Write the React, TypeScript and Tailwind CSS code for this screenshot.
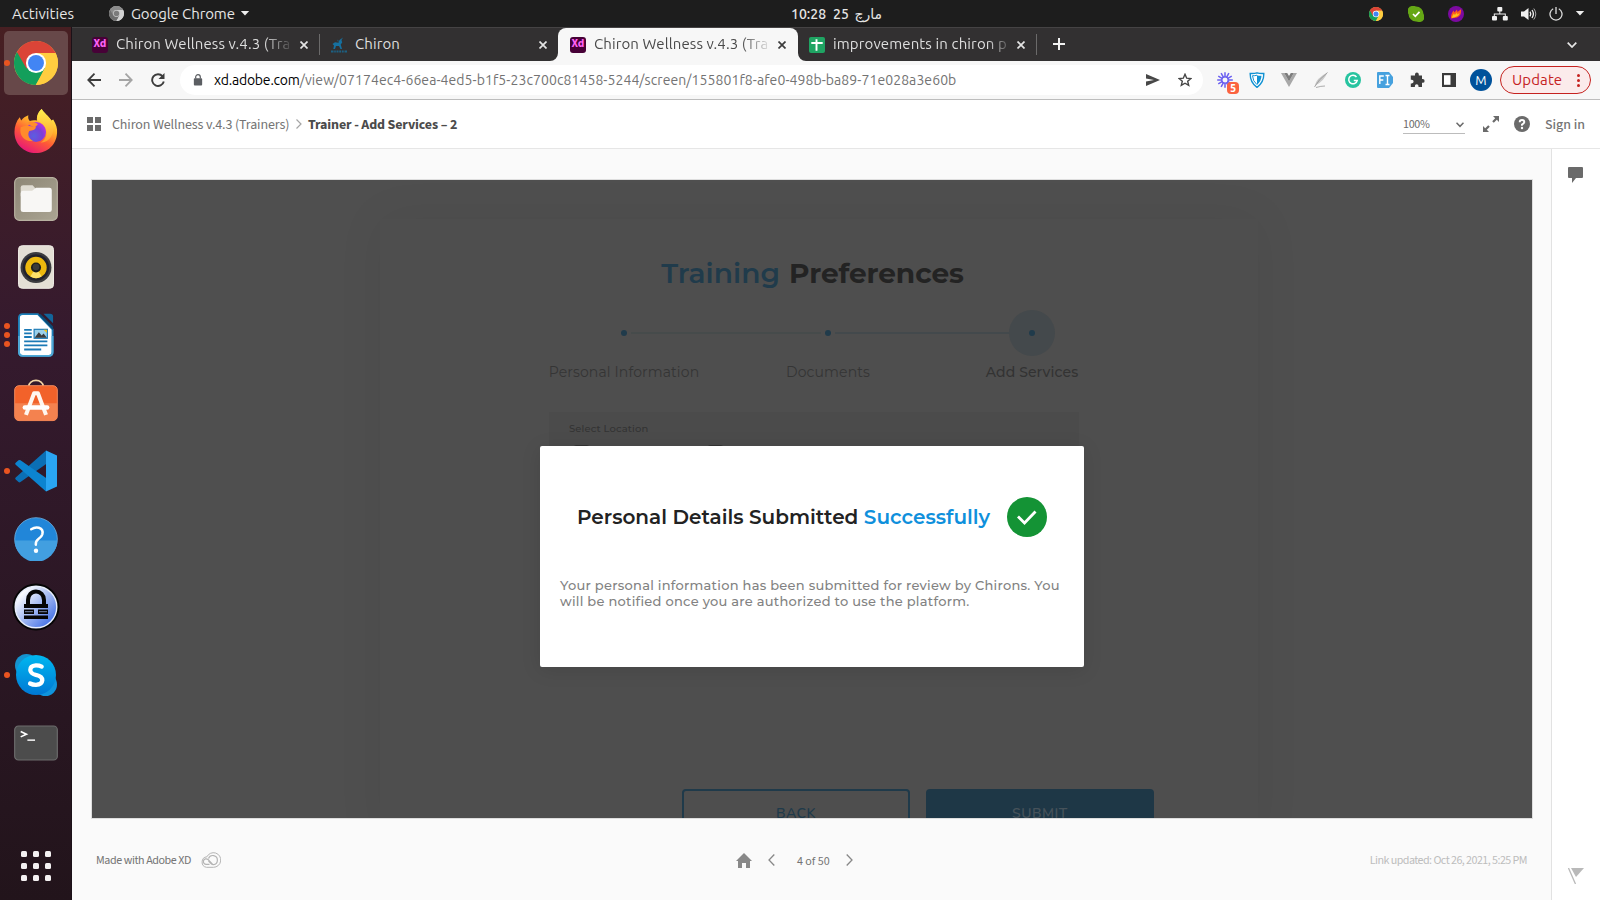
import React from "react";
import type { ReactNode } from "react";

type IconProps = { className?: string };

const UBUNTU = "font-[Ubuntu,'Noto_Sans','DejaVu_Sans',sans-serif]";
const SOURCE = "font-['Source_Sans_3','Noto_Sans_CJK_SC',sans-serif]";
const MONT = "font-[Montserrat,Inter,sans-serif]";
const NUNITO = "font-[Nunito,'Open_Sans',sans-serif]";

/* ---------- Dock icons ---------- */

function ChromeLogo({ className, mono = false }: IconProps & { mono?: boolean }) {
  const red = mono ? "#8c8c8c" : "#db4437";
  const green = mono ? "#6e6e6e" : "#139f5b";
  const yellow = mono ? "#d2d2d2" : "#ffcd40";
  return (
    <svg viewBox="0 0 48 48" className={className}>
      <circle cx="24" cy="24" r="24" fill={yellow} />
      <path d="M24 24 L3.2 12 A24 24 0 0 0 23.6 48 L34.4 30 Z" fill={green} />
      <path d="M24 24 L13.6 30 L3.2 12 A24 24 0 0 1 44.8 12 L46 13 L24 13 Z" fill={red} />
      <path d="M24 13 H45.3 A24 24 0 0 1 24 48 L33.5 29.5 Z" fill={yellow} />
      <circle cx="24" cy="24" r="11" fill={mono ? "#c8c8c8" : "#fff"} />
      <circle cx="24" cy="24" r="8.7" fill={mono ? "#7b7b7b" : "#4285f4"} />
    </svg>
  );
}

function FirefoxLogo({ className }: IconProps) {
  return (
    <svg viewBox="0 0 46 48" className={className}>
      <defs>
        <linearGradient id="ffBody" x1="0.8" y1="0.05" x2="0.3" y2="1">
          <stop offset="0" stopColor="#fff44f" />
          <stop offset="0.35" stopColor="#ffb02a" />
          <stop offset="0.62" stopColor="#ff5a36" />
          <stop offset="1" stopColor="#e5157a" />
        </linearGradient>
        <radialGradient id="ffGlobe" cx="0.4" cy="0.7" r="0.7">
          <stop offset="0" stopColor="#5b5fe0" />
          <stop offset="0.6" stopColor="#7a3fd6" />
          <stop offset="1" stopColor="#b833e1" />
        </radialGradient>
        <linearGradient id="ffTail" x1="0.5" y1="0" x2="0.5" y2="1">
          <stop offset="0" stopColor="#fff14d" />
          <stop offset="1" stopColor="#ff9a2e" />
        </linearGradient>
      </defs>
      <path
        d="M29 1 C31 5 36 8 39 13 L41 12 C44 17 45.5 21 45 26 C44.5 38 35 47 23 47 C10 47 0.500 37.500 0.500 25 C0.500 19 2.500 13.500 6 9.500 L7.500 13 C9.500 10.500 12 8.500 15 7.500 C14.500 10 15 12 16.500 13.500 C19 12.500 22 12.500 24 13 C23.500 8 26 3.500 29 1 Z"
        fill="url(#ffBody)"
      />
      <circle cx="23" cy="25" r="10.500" fill="url(#ffGlobe)" />
      <path d="M29 1 C31 5 36 8 39 13 C42 18 42 26 38 31 C35 35 31 36 28 36 C34 33 35 26 33 21 C31 16 26 15 24.500 12 C23.500 8 26 3.500 29 1 Z" fill="url(#ffTail)" />
      <path d="M7 20 C11 18 17 18.500 23 20 C22.500 22.500 19 23.500 16 24 C14 27 15 32 20 34.500 C11 35 5 29 7 20 Z" fill="#ff8b2c" />
      <path d="M14 15 C18 13.500 23 15 25 17 L22 20 C19 19.500 16 18 14 15 Z" fill="#ff8e2b" />
    </svg>
  );
}

function FilesLogo({ className }: IconProps) {
  return (
    <svg viewBox="0 0 46 46" className={className}>
      <defs>
        <linearGradient id="filesBg" x1="0" y1="0" x2="1" y2="1">
          <stop offset="0" stopColor="#8d8675" />
          <stop offset="1" stopColor="#aaa492" />
        </linearGradient>
      </defs>
      <rect x="0.700" y="0.700" width="44.600" height="44.600" rx="5" fill="url(#filesBg)" stroke="#b8b2a1" strokeWidth="1.200" />
      <path d="M7 11 q0 -2.500 2.500 -2.500 h10 l3 3.500 v8 h-15.500z" fill="#dfdbd1" />
      <path d="M7 17 q0 -2.500 2.500 -2.500 h9.500 l4 -3.300 h14 q2.500 0 2.500 2.500 v20.500 q0 2.500 -2.500 2.500 h-27.500 q-2.500 0 -2.500 -2.500z" fill="#f8f7f5" />
    </svg>
  );
}

function RhythmboxLogo({ className }: IconProps) {
  return (
    <svg viewBox="0 0 38 46" className={className}>
      <rect x="0.500" y="0.500" width="37" height="45" rx="4" fill="#e4dfd5" stroke="#f3f0ea" />
      <circle cx="19" cy="23.500" r="16.300" fill="#3c3c3f" />
      <circle cx="19" cy="23.500" r="14" fill="#22222c" />
      <circle cx="19" cy="23.500" r="11.300" fill="#edb90e" />
      <path d="M19 23.500 L13 33 A11.300 11.300 0 0 0 25 33 Z" fill="#ffe169" />
      <circle cx="19" cy="23.500" r="5.300" fill="#1d1d1d" />
      <circle cx="19" cy="23" r="3.500" fill="#3a3a3a" />
    </svg>
  );
}

function WriterLogo({ className }: IconProps) {
  return (
    <svg viewBox="0 0 38 46" className={className}>
      <path d="M5 1 H21 L36.500 17 V41 q0 4 -4 4 H5 q-4 0 -4 -4 V5 q0 -4 4 -4z" fill="#fff" stroke="#1c7fb8" strokeWidth="2" />
      <path d="M1 24 V41 q0 4 4 4 H32.500 q4 0 4 -4 V24" fill="none" stroke="#4fa9d6" strokeWidth="2" />
      <path d="M27 0.500 H34 q3 0 3 3 V10.500 Z" fill="#12659a" />
      <path d="M21 1 H24 L37 14 V18z" fill="#0b4a75" />
      <path d="M6.500 17.500h8M6.500 21.300h8M6.500 25.100h8M6.500 29.700h24.500M6.500 34h24.500M6.500 38.300h18" stroke="#1b79b5" strokeWidth="1.900" />
      <rect x="17" y="17" width="14" height="9.500" fill="#9bd0ea" stroke="#1b79b5" strokeWidth="1.200" />
      <path d="M17.500 26 l4.500 -6 3 3.500 2 -2 3.500 4.500z" fill="#3c3c3c" />
      <path d="M27 17.500h3.500v3.500z" fill="#f5c211" />
    </svg>
  );
}

function SoftwareLogo({ className }: IconProps) {
  return (
    <svg viewBox="0 0 46 44" className={className}>
      <path d="M15.500 9 V7 a7.500 6 0 0 1 15 0 v2" fill="none" stroke="#f3d6a5" strokeWidth="1.800" />
      <rect x="0.700" y="6.500" width="44.600" height="36.500" rx="4.500" fill="#f2622a" stroke="#f58a5c" strokeWidth="1" />
      <path d="M1 25 H45 V38.500 q0 4.500 -4.500 4.500 H5.500 q-4.500 0 -4.500 -4.500z" fill="#f4824f" />
      <path d="M12.500 37 L21 14.500 h4 L33.500 37" fill="none" stroke="#fff7f0" strokeWidth="4.200" strokeLinejoin="round" />
      <rect x="9" y="27" width="28" height="4.600" rx="2.300" fill="#fff" />
    </svg>
  );
}

function CodeLogo({ className }: IconProps) {
  return (
    <svg viewBox="0 0 42 42" className={className}>
      <path d="M31 0.500 L34 12 L5.500 32 q-1 .8 -2 0 L0.700 29.500 q-1 -1 0 -2z" fill="#0b6fb5" />
      <path d="M31 41.500 L34 30 L5.500 10.300 q-1 -.8 -2 0 L0.700 12.800 q-1 1 0 2z" fill="#0c84d0" />
      <path d="M31 0.500 L42 5.500 V36.500 L31 41.500 Z" fill="#2aa5f2" />
    </svg>
  );
}

function HelpLogo({ className }: IconProps) {
  return (
    <svg viewBox="0 0 46 46" className={className}>
      <circle cx="23" cy="23" r="22.300" fill="#2186d9" stroke="#6fb4e6" strokeWidth="0.800" />
      <path d="M0.700 24.500 H45.300 A22.300 22.300 0 0 1 0.700 24.500z" fill="#429fe0" />
      <path d="M18 12.800 q4 -2.600 8 -1.500 q5 1.600 3.600 6.800 q-.8 2.600 -3.800 4.600 q-3.300 2.300 -3 6.300" fill="none" stroke="#fff" strokeWidth="2.600" strokeLinecap="round" />
      <circle cx="23" cy="35.300" r="2.300" fill="#fff" />
    </svg>
  );
}

function KeepassLogo({ className }: IconProps) {
  return (
    <svg viewBox="0 0 48 48" className={className}>
      <defs>
        <linearGradient id="keeBg" x1="0.150" y1="0.150" x2="0.850" y2="0.850">
          <stop offset="0" stopColor="#ffffff" />
          <stop offset="1" stopColor="#4a76e6" />
        </linearGradient>
      </defs>
      <circle cx="24" cy="24" r="23.500" fill="#050505" />
      <circle cx="24" cy="24" r="20.800" fill="url(#keeBg)" stroke="#e9effc" strokeWidth="1.400" />
      <path d="M16 22 V17 a8 8.500 0 0 1 16 0 v5" fill="none" stroke="#050505" strokeWidth="4" />
      <path d="M12 21 H36 V25 H12z M12 26.500 H22 V31 H12z M26 26.500 H36 V31 H26z M12 32.500 H36 V36 H12z" fill="#050505" />
      <path d="M13 28.700h8M27 28.700h8" stroke="#a9bdf0" strokeWidth="0.700" />
    </svg>
  );
}

function SkypeLogo({ className }: IconProps) {
  return (
    <svg viewBox="0 0 42 42" className={className}>
      <defs>
        <linearGradient id="skBody" x1="0.500" y1="0" x2="0.500" y2="1">
          <stop offset="0" stopColor="#00b7f0" />
          <stop offset="1" stopColor="#0078d4" />
        </linearGradient>
      </defs>
      <circle cx="11.500" cy="11.500" r="11.500" fill="#1593cf" />
      <circle cx="30.500" cy="30.500" r="11.500" fill="#0f94dd" />
      <circle cx="21" cy="21" r="20" fill="url(#skBody)" />
      <path d="M26.700 12.600 q-2.600 -1.300 -5.900 -1.200 q-5.600 .4 -5.500 4.600 q.2 3.500 5.500 4.900 q6.600 1.500 6.500 5.400 q-.4 4.400 -6.300 4.500 q-3.500 0 -5.900 -1.300" fill="none" stroke="#fff" strokeWidth="4.300" strokeLinecap="round" />
    </svg>
  );
}

function TerminalLogo({ className }: IconProps) {
  return (
    <svg viewBox="0 0 46 37" className={className}>
      <rect x="0.700" y="0.700" width="44.600" height="35.600" rx="4" fill="#4c4c4c" stroke="#6c6c6c" strokeWidth="1.200" />
      <path d="M7 6.500 L13 9.300 L7 12.100" fill="none" stroke="#fff" strokeWidth="1.700" />
      <path d="M14 15.500 h8" stroke="#fff" strokeWidth="1.500" />
    </svg>
  );
}

function DockItem({ children, pips = 0, active = false }: { children: ReactNode; pips?: number; active?: boolean }) {
  return (
    <div className={active ? "flex h-[72px] w-[72px] items-center pb-1" : "flex h-[68px] w-[72px] items-center"}>
      <div className="z-10 flex w-1 shrink-0 flex-col gap-[3px]">
        {Array.from({ length: pips }, (_, i) => (
          <span key={i} className="ml-1 size-1.5 shrink-0 rounded-full bg-[#e95420]" />
        ))}
      </div>
      <div className={active ? "flex size-16 items-center justify-center rounded-[5px] bg-[#674849]" : "flex size-16 items-center justify-center"}>
        {children}
      </div>
    </div>
  );
}

function Dock() {
  return (
    <aside className="flex w-[72px] shrink-0 flex-col border-r border-[#1b1118] bg-linear-to-b from-[#471f22] via-[#351a2e] via-35% to-[#22141b] pt-0.5">
      <DockItem pips={1} active><ChromeLogo className="size-11" /></DockItem>
      <div className="-mt-1 flex flex-col">
        <DockItem><FirefoxLogo className="h-[46px] w-11" /></DockItem>
        <DockItem><FilesLogo className="size-11" /></DockItem>
        <DockItem><RhythmboxLogo className="h-11 w-9" /></DockItem>
        <DockItem pips={3}><WriterLogo className="h-11 w-9" /></DockItem>
        <DockItem><SoftwareLogo className="-mt-1.5 h-[43px] w-11" /></DockItem>
        <DockItem pips={1}><CodeLogo className="size-[42px]" /></DockItem>
        <DockItem><HelpLogo className="size-11" /></DockItem>
        <DockItem><KeepassLogo className="size-[48px]" /></DockItem>
        <DockItem pips={1}><SkypeLogo className="size-[42px]" /></DockItem>
        <DockItem><TerminalLogo className="h-9 w-11" /></DockItem>
      </div>
      <div className="mt-auto mb-[19px] grid grid-cols-3 gap-1.5 self-center">
        {Array.from({ length: 9 }, (_, i) => (
          <span key={i} className="size-1.5 rounded-[1.5px] bg-[#f4f1f2]" />
        ))}
      </div>
    </aside>
  );
}

/* ---------- System bar ---------- */

function TopBar() {
  return (
    <header className={`${UBUNTU} flex h-[27px] shrink-0 items-center bg-[#1d1d1d] text-[15px] leading-none text-[#e6e6e6]`}>
      <span className="ml-3 w-[97px] tracking-[0.05px]">Activities</span>
      <ChromeLogo mono className="size-[15px]" />
      <span className="ml-[7px] w-[109px] tracking-[-0.1px]">Google Chrome</span>
      <svg viewBox="0 0 10 6" className="h-[5px] w-[10px]"><path d="M0 0h10L5 5.500z" fill="#eee" /></svg>
      <div className="ml-[541px] flex items-center text-[14px] font-medium">
        <span className="w-[42px]">10:28</span>
        <span className="w-[21px]">25</span>
        <span dir="rtl" className="w-7">مارچ</span>
      </div>
      <div className="ml-auto flex items-center pr-[15px]">
        <ChromeLogo className="mr-[25px] size-[14px]" />
        <svg viewBox="0 0 16 16" className="mr-6 size-4">
          <path d="M5 0a5 5 0 0 1 3 .5A7.500 7.500 0 0 1 15.500 8 5 5 0 0 1 11 16 8 8 0 0 1 8 15.500 7.500 7.500 0 0 1 .5 8 5 5 0 0 1 5 0z" fill="#65a715" />
          <path d="M5 8l2.300 2.300L11.500 5.800" stroke="#fff" strokeWidth="1.700" fill="none" />
        </svg>
        <svg viewBox="0 0 16 16" className="mr-7 size-4">
          <circle cx="8" cy="8" r="8" fill="#7c0aa0" />
          <path d="M3 12.500C2.500 9 4 7 5.500 4.500L6.500 6.500 9 3.500 9.500 6 13 3.200C13.500 8 12 10 9 11.500z" fill="#ff5a1f" />
          <path d="M4 12c0-2 1-3 2-4.500l.8 1.500L9 6.500l.3 2L11.500 7C11 10 8 11 4 12z" fill="#ffc21a" />
        </svg>
        <svg viewBox="0 0 16 14" className="mr-[13px] h-[14px] w-4" fill="#f0f0f0">
          <rect x="5.300" y="0" width="5" height="4.500" rx="1" />
          <rect x="0" y="9" width="5" height="4.500" rx="1" />
          <rect x="10.800" y="9" width="5" height="4.500" rx="1" />
          <path d="M7.300 4h1v2.500h5.500V9.500h-1V7.500h-10v2h-1V6.500h5.500z" />
        </svg>
        <svg viewBox="0 0 16 14" className="mr-3 h-[14px] w-4">
          <path d="M0 4.500h3L7.500 1v12L3 9.500H0z" fill="#f0f0f0" />
          <path d="M9 4.700q1.500 2.300 0 4.600M11 3q2.800 4 0 8" stroke="#f0f0f0" strokeWidth="1.300" fill="none" />
          <path d="M12.800 1.500q4 5.500 0 11" stroke="#aaa" strokeWidth="1" fill="none" />
        </svg>
        <svg viewBox="0 0 14 14" className="mr-3 size-[14px]" fill="none" stroke="#ddd" strokeWidth="1.300">
          <path d="M4.200 1.800a6 6 0 1 0 5.600 0M7 0v7" />
        </svg>
        <svg viewBox="0 0 10 6" className="h-[5px] w-[10px]"><path d="M0 0h10L5 5.500z" fill="#eee" /></svg>
      </div>
    </header>
  );
}

/* ---------- Browser ---------- */

function XdIcon() {
  return (
    <span className="flex size-4 shrink-0 items-center justify-center rounded-[3px] bg-[#470137] pb-px font-['Source_Sans_3','Open_Sans',sans-serif] text-[11.5px] leading-none font-bold text-[#ff61f6]">
      Xd
    </span>
  );
}

function ChironIcon() {
  return (
    <svg viewBox="0 0 16 16" className="size-4 shrink-0" fill="#16709f">
      <path d="M8.500 3L12 0.500l-1.500 2.500.7 2.500L9.700 7.500 11 12H9.500L8 9H5L4 12H2.300L3 8.500 1.500 7 4 5.300l3.500.5z" />
      <path d="M6 2.500l2 1.500-1 1z" opacity=".7" />
      <path d="M0 13.500h2.500v2H0zM3.200 13.500h1.600v2H3.200zM5.500 13.500h2v2h-2zM8.200 13.500h2v2h-2zM11 13.500h1.700v2H11zM13.500 13.500H16v2h-2.500z" opacity=".75" />
    </svg>
  );
}

function SheetsIcon() {
  return (
    <svg viewBox="0 0 16 16" className="size-4 shrink-0">
      <rect width="16" height="16" rx="2" fill="#1fa463" />
      <path d="M2.300 6h11.400M7.500 2.300v11.400" stroke="#fff" strokeWidth="1.900" />
    </svg>
  );
}

function CloseIcon({ color }: { color: string }) {
  return (
    <svg viewBox="0 0 8 8" className="size-2 shrink-0">
      <path d="M0.500 0.500l7 7M7.500 0.500l-7 7" stroke={color} strokeWidth="1.700" />
    </svg>
  );
}

function TabStrip() {
  return (
    <div className={`${UBUNTU} flex h-[34px] shrink-0 items-center border-t border-[#454344] bg-[#323031] text-[15px] leading-5 text-[#dedede]`}>
      <div className="flex w-[247px] items-center pl-5">
        <XdIcon />
        <span className="ml-2 w-[184px] pb-0.5 tracking-[0.1px] whitespace-nowrap mask-r-from-80% mask-r-to-97%">Chiron Wellness v.4.3 (Tra</span>
        <CloseIcon color="#e4e4e4" />
      </div>
      <span className="h-[21px] w-px bg-[#6b6a6a]" />
      <div className="flex w-[238px] items-center pl-[11px]">
        <ChironIcon />
        <span className="ml-2 w-[184px] pb-0.5 tracking-[0.1px]">Chiron</span>
        <CloseIcon color="#e4e4e4" />
      </div>
      <div className="relative flex h-full w-[240px] items-center rounded-t-lg bg-[#f7f7f7] pl-3 text-[#4a4a4a]">
        <svg viewBox="0 0 8 8" className="absolute bottom-0 -left-2 size-2"><path d="M8 0v8H0A8 8 0 0 0 8 0z" fill="#f7f7f7" /></svg>
        <svg viewBox="0 0 8 8" className="absolute -right-2 bottom-0 size-2"><path d="M0 0v8h8A8 8 0 0 1 0 0z" fill="#f7f7f7" /></svg>
        <XdIcon />
        <span className="ml-2 w-[184px] pb-0.5 tracking-[0.1px] whitespace-nowrap mask-r-from-80% mask-r-to-97%">Chiron Wellness v.4.3 (Tra</span>
        <CloseIcon color="#3c3c3c" />
      </div>
      <div className="flex w-[238px] items-center pl-[11px]">
        <SheetsIcon />
        <span className="ml-2 w-[184px] pb-0.5 tracking-[0.12px] whitespace-nowrap mask-r-from-84% mask-r-to-98%">improvements in chiron p</span>
        <CloseIcon color="#e4e4e4" />
      </div>
      <span className="h-[21px] w-px bg-[#6b6a6a]" />
      <svg viewBox="0 0 12 12" className="mb-px ml-4 size-3"><path d="M6 0v12M0 6h12" stroke="#f2f2f2" strokeWidth="2" /></svg>
      <svg viewBox="0 0 10 6" className="mr-[23px] ml-auto h-1.5 w-[10px]"><path d="M0.700 0.700L5 5l4.300-4.300" stroke="#e8e8e8" strokeWidth="1.700" fill="none" /></svg>
    </div>
  );
}

const RAYS = [0, 30, 60, 90, 120, 150, 180, 210, 240, 270, 300, 330];

function AddressBar() {
  return (
    <div className={`${UBUNTU} flex h-[39px] shrink-0 items-center border-b border-[#bdbdbd] bg-[#f7f7f7] pr-[9px] pl-[15px]`}>
      <svg viewBox="0 0 14 14" className="size-[14px]" fill="none" stroke="#3c3c3c" strokeWidth="1.800"><path d="M14 7H1.500M7.500 0.700L1.300 7l6.200 6.300" /></svg>
      <svg viewBox="0 0 14 14" className="ml-[18px] size-[14px]" fill="none" stroke="#a5a5a5" strokeWidth="1.800"><path d="M0 7h12.500M6.500 0.700L12.700 7l-6.200 6.300" /></svg>
      <svg viewBox="0 0 14 14" className="ml-[18px] size-[14px]">
        <path d="M11.600 3.300A5.900 5.900 0 1 0 12.800 8.500" fill="none" stroke="#3c3c3c" strokeWidth="1.900" />
        <path d="M13.500 0v6H7.500z" fill="#3c3c3c" />
      </svg>
      <div className="ml-[15px] flex h-[30px] w-[1023px] items-center rounded-full bg-white pl-[13px]">
        <svg viewBox="0 0 10 13" className="h-3 w-[10px]">
          <rect x="0.500" y="4.500" width="9" height="8" rx="1" fill="#5b5e62" />
          <path d="M2.500 5V3.200a2.500 2.500 0 0 1 5 0V5" fill="none" stroke="#5b5e62" strokeWidth="1.300" />
        </svg>
        <p className="ml-[11px] w-[930px] text-[14px] leading-5 whitespace-nowrap text-[#737373]">
          <span className="tracking-[-0.2px] text-black">xd.adobe.com</span>
          <span className="tracking-[0.077px]">/view/07174ec4-66ea-4ed5-b1f5-23c700c81458-5244/screen/155801f8-afe0-498b-ba89-71e028a3e60b</span>
        </p>
        <svg viewBox="0 0 14 12" className="ml-[2px] h-3 w-[14px]"><path d="M0 0l14 6-14 6V7.500L8 6 0 4.500z" fill="#474747" /></svg>
        <svg viewBox="0 0 14 14" className="ml-[18px] size-[14px]"><path d="M7 1.300l1.700 3.900 4.200.3-3.200 2.800 1 4.100L7 10.200l-3.700 2.200 1-4.100L1.100 5.500l4.200-.3z" fill="none" stroke="#444" strokeWidth="1.400" /></svg>
      </div>
      <div className="flex flex-1 items-center pl-[14px]">
        <div className="relative size-4">
          <svg viewBox="0 0 16 16" className="size-4" stroke="#6a5ff0" fill="none">
            {RAYS.map((deg) => (
              <path key={deg} d="M8 0.200v5" strokeWidth="1.500" transform={`rotate(${deg} 8 8)`} />
            ))}
            <circle cx="8" cy="8" r="3.200" strokeWidth="1.300" />
          </svg>
          <span className="absolute top-[10px] left-[10px] flex size-3 items-center justify-center rounded-sm bg-[#fb6340] font-['Open_Sans',sans-serif] text-[10px] leading-none font-bold text-white">5</span>
        </div>
        <svg viewBox="0 0 16 16" className="ml-4 size-4">
          <path d="M8 .8q3 1 6.800.7Q15 10.500 8 15.300 1 10.500 1.200 1.500 5 1.800 8 .8z" fill="#fff" stroke="#1192d3" strokeWidth="1.400" />
          <path d="M8 3.200q2.200.7 4.500.5-.2 5.500-4.500 9z" fill="#1192d3" />
          <path d="M8 3.200q-2.200.7-4.500.5.200 5.500 4.500 9" fill="none" stroke="#1192d3" strokeWidth="1" />
        </svg>
        <svg viewBox="0 0 16 14" className="ml-4 h-[14px] w-4"><path d="M0 0h3.200L8 8.500 12.800 0H16L8 14z" fill="#a8a8a8" /><path d="M3.200 0h3L8 3l1.800-3h3L8 8.500z" fill="#7d7d7d" /></svg>
        <svg viewBox="0 0 16 16" className="ml-4 size-4"><path d="M14.500.5Q3 6 1.500 14.500L3 13Q11 9 14.500.5z" fill="#c9c9c9" /><path d="M14.500.5Q5 8 1.500 15M3 15.500q5-1.500 9-1.500" stroke="#8d8d8d" strokeWidth=".7" fill="none" /></svg>
        <svg viewBox="0 0 16 16" className="ml-4 size-4"><circle cx="8" cy="8" r="8" fill="#27c4a0" /><path d="M11.500 5A4.300 4.300 0 1 0 12.200 8.500H8.800" fill="none" stroke="#fff" strokeWidth="1.500" /></svg>
        <svg viewBox="0 0 16 16" className="ml-4 size-4"><path d="M1 0h11l4 5v6l-4 5H1q-1 0-1-1V1q0-1 1-1z" fill="#46a1de" /><path d="M2.800 12V4h4M2.800 8h3.500M8.500 3.500h4M8.500 12.500h4M10.500 3.500v9" stroke="#fff" strokeWidth="1.400" fill="none" /></svg>
        <svg viewBox="0 0 16 16" className="ml-4 size-4"><path d="M6 2.500a1.900 1.900 0 0 1 3.800 0V3.500H13V7h.7a1.900 1.900 0 0 1 0 3.800H13V15H9.500v-1a1.800 1.800 0 0 0-3.600 0v1H1.800v-3.600h1a1.800 1.800 0 0 0 0-3.600h-1V3.500H6z" fill="#3e3e3e" /></svg>
        <svg viewBox="0 0 14 14" className="ml-[17px] size-[14px]"><path d="M0 0h14v14H0z" fill="#3b3b3b" /><path d="M2 2.200h6.500v9.600H2z" fill="#fff" /></svg>
        <span className="ml-[14px] flex size-[22px] items-center justify-center rounded-full bg-[#00529b] text-[13px] leading-none text-white">M</span>
        <div className="ml-2 flex h-7 w-[91px] items-center rounded-full border border-[#c5221f] bg-[#fbebeb] pl-[11px]">
          <span className="w-[65px] text-[15px] leading-5 tracking-[0.1px] text-[#c5221f]">Update</span>
          <span className="flex flex-col gap-[2px]">
            <i className="size-[3px] rounded-full bg-[#c5221f]" />
            <i className="size-[3px] rounded-full bg-[#c5221f]" />
            <i className="size-[3px] rounded-full bg-[#c5221f]" />
          </span>
        </div>
      </div>
    </div>
  );
}

/* ---------- Prototype viewer ---------- */

function ViewerHeader() {
  return (
    <div className={`${SOURCE} flex h-[49px] shrink-0 items-center border-b border-[#e6e6e6] bg-white pl-[15px] text-[14px] leading-5 text-[#747474]`}>
      <span className="grid size-[14px] grid-cols-2 gap-[2px]">
        <i className="bg-[#6b6b6b]" />
        <i className="bg-[#6b6b6b]" />
        <i className="bg-[#6b6b6b]" />
        <i className="bg-[#6b6b6b]" />
      </span>
      <span className="ml-[11px] w-[184px] pt-0.5 tracking-[-0.13px] whitespace-nowrap">Chiron Wellness v.4.3 (Trainers)</span>
      <svg viewBox="0 0 6 10" className="mr-1.5 h-[10px] w-1.5"><path d="M0.500 0.500L5 5l-4.500 4.500" stroke="#a5a5a5" strokeWidth="1.200" fill="none" /></svg>
      <span className="w-[160px] pt-0.5 font-bold tracking-[-0.14px] whitespace-nowrap text-[#4b4b4b]">Trainer - Add Services – 2</span>
      <div className="ml-auto flex items-center">
        <div className="mr-[18px] flex h-5 w-[62px] items-center justify-between border-b border-[#bcbcbc] text-[12px] text-[#6b6b6b]">
          <span className="pt-0.5 tracking-[-0.3px]">100%</span>
          <svg viewBox="0 0 8 6" className="mt-0.5 mr-[1px] h-1.5 w-2"><path d="M0.500 0.700L4 4.300 7.500 0.700" stroke="#6b6b6b" strokeWidth="1.500" fill="none" /></svg>
        </div>
        <svg viewBox="0 0 16 16" className="mr-[15px] size-4" fill="#6b6b6b">
          <path d="M10 0h6v6l-2.200-2.200-3 3-1.600-1.600 3-3zM6 16H0v-6l2.200 2.200 3-3 1.600 1.600-3 3z" />
        </svg>
        <svg viewBox="0 0 16 16" className="mr-[15px] size-4">
          <circle cx="8" cy="8" r="8" fill="#6b6b6b" />
          <path d="M5.700 6.300Q5.700 4 8 4t2.300 2.100Q10.300 7.500 8 8.700v1" fill="none" stroke="#fff" strokeWidth="1.900" />
          <circle cx="8" cy="12" r="1.200" fill="#fff" />
        </svg>
        <span className="w-[55px] pt-0.5 font-medium">Sign in</span>
      </div>
    </div>
  );
}

function Step({ label, current = false }: { label: string; current?: boolean }) {
  return (
    <div className="flex w-[204px] flex-col items-center">
      <span className={current ? "flex size-[46px] items-center justify-center rounded-full bg-[#44494c]" : "flex size-[46px] items-center justify-center"}>
        <span className="size-1.5 rounded-full bg-[#203b4b]" />
      </span>
      <span className={current ? "mt-[6px] pl-px text-[14px] leading-5 font-medium tracking-[0.09px] text-[#333]" : "mt-[6px] pl-px text-[14px] leading-5 tracking-[0.12px] text-[#353535]"}>{label}</span>
    </div>
  );
}

function PreferencesScreen() {
  return (
    <div className={`${MONT} ml-[288px] flex h-[620px] w-[878px] shrink-0 flex-col items-center bg-[#4e4e4e] shadow-[0_0_46px_rgba(0,0,0,0.06)]`}>
      <h1 className="mt-[36px] mr-[13px] flex gap-[9px] text-[28px] leading-9">
        <span className="font-semibold tracking-[0.1px] text-[#203b4b]">Training</span>
        <span className="font-bold tracking-[-0.100px] text-[#232323]">Preferences</span>
      </h1>
      <div className="relative mt-[19px] ml-[17px] flex">
        <span className="absolute top-[22px] left-[109px] h-[2px] w-[190px] bg-[#464b4b]" />
        <span className="absolute top-[22px] left-[313px] h-[2px] w-[174px] bg-[#43494c]" />
        <Step label="Personal Information" />
        <Step label="Documents" />
        <Step label="Add Services" current />
      </div>
      <div className="mt-[30px] ml-[169px] flex h-[70px] w-[530px] shrink-0 flex-col self-start bg-[#4b4b4b]">
        <span className="mt-[9px] ml-5 text-[10px] leading-4 font-medium tracking-[0.1px] text-[#333]">Select Location</span>
        <div className="mt-2 ml-6 flex gap-[117px]">
          <span className="h-4 w-[17px] rounded-sm bg-[#333]" />
          <span className="h-4 w-[17px] rounded-sm bg-[#333]" />
        </div>
      </div>
      <div className={`${NUNITO} mt-[307px] ml-[302px] flex gap-4 self-start text-[14px] leading-[21px] font-semibold tracking-[0.500px]`}>
        <span className="flex h-12 w-[228px] items-start justify-center rounded-[4px] border-2 border-[#1f3a4a] pt-3 text-[#1f3a4a]">BACK</span>
        <span className="flex h-12 w-[228px] items-start justify-center rounded-[4px] bg-[#1e3746] pt-[14px] text-[#46525a]">SUBMIT</span>
      </div>
    </div>
  );
}

function SuccessDialog() {
  return (
    <div className={`${MONT} absolute top-[266px] left-[448px] flex h-[221px] w-[544px] flex-col rounded-[2px] bg-white shadow-[0_3px_20px_rgba(0,0,0,0.1)]`}>
      <div className="mt-[51px] ml-[37px] flex items-center">
        <h2 className="w-[430px] text-[20px] leading-6 font-semibold whitespace-nowrap text-[#222]">
          Personal Details Submitted <span className="text-[#0f90dc]">Successfully</span>
        </h2>
        <svg viewBox="0 0 40 40" className="size-10">
          <circle cx="20" cy="20" r="20" fill="#149335" />
          <path d="M11 19.500l6.500 6.500L28.500 14.500" fill="none" stroke="#fff" strokeWidth="2.800" />
        </svg>
      </div>
      <p className="mt-[40px] ml-5 text-[13px] leading-4 font-medium tracking-[0.260px] whitespace-nowrap text-[#828282]">
        Your personal information has been submitted for review by Chirons. You
        <br />
        will be notified once you are authorized to use the platform.
      </p>
    </div>
  );
}

function Viewer() {
  return (
    <div className={`${SOURCE} flex min-h-0 flex-1`}>
      <main className="flex w-[1479px] flex-col bg-[#fafafa] pt-[30px]">
        <div className="ml-[19px] h-[640px] w-[1442px] shrink-0 border border-[#dedede]">
          <div className="relative flex h-full overflow-hidden bg-[#4f4f4f] pt-[39px]">
            <PreferencesScreen />
            <SuccessDialog />
          </div>
        </div>
        <footer className="ml-6 flex h-[82px] shrink-0 items-center text-[12px] leading-4">
          <span className="w-[103px] pt-0.5 tracking-[-0.42px] whitespace-nowrap text-[#747474]">Made with Adobe XD</span>
          <svg viewBox="0 0 22 16" className="h-4 w-[22px]" fill="none" stroke="#b4b4b4">
            <path d="M7.500 15.300h7a7.300 7.300 0 1 0-6.600-10.500A5.300 5.300 0 0 0 7.500 15.300z" strokeWidth="1" />
            <path d="M13.500 12.200L9 7.500a2.800 2.800 0 1 0-1.500 4.900h3M9.500 6.500a4.600 4.600 0 1 1 5 6.200q-1.500 0-2.500-1.200L9.500 9" strokeWidth="1.200" />
          </svg>
          <svg viewBox="0 0 16 15" className="ml-[515px] h-[15px] w-4"><path d="M8 0l8 8h-2v7h-4v-5H6v5H2V8H0z" fill="#888" /></svg>
          <svg viewBox="0 0 7 12" className="ml-4 h-3 w-[7px]"><path d="M6.300 0.500L1 6l5.300 5.500" stroke="#888" strokeWidth="1.300" fill="none" /></svg>
          <span className="ml-[22px] w-[49px] pt-1 text-[#747474]">4 of 50</span>
          <svg viewBox="0 0 7 12" className="h-3 w-[7px]"><path d="M0.700 0.500L6 6 0.700 11.500" stroke="#888" strokeWidth="1.300" fill="none" /></svg>
          <span className="mr-6 ml-auto pt-0.5 tracking-[-0.55px] whitespace-nowrap text-[#bdbdbd]">Link updated: Oct 26, 2021, 5:25 PM</span>
        </footer>
      </main>
      <aside className="flex flex-1 flex-col items-center justify-between border-l border-[#e2e2e2] bg-white pt-[18px] pb-4">
        <svg viewBox="0 0 15 16" className="mr-px h-4 w-[15px]"><path d="M1 0h13q1 0 1 1v9q0 1-1 1H8l-4 5v-5H1q-1 0-1-1V1q0-1 1-1z" fill="#6a6a6a" /></svg>
        <svg viewBox="0 0 16 16" className="size-4"><path d="M0.500 0l7 16" stroke="#b9b9b9" strokeWidth="1.300" /><path d="M3 0h13l-8 9z" fill="#b9b9b9" /></svg>
      </aside>
    </div>
  );
}

export default function App() {
  return (
    <div className="flex h-[900px] w-[1600px] flex-col overflow-hidden">
      <TopBar />
      <div className="flex min-h-0 flex-1">
        <Dock />
        <div className="flex min-w-0 flex-1 flex-col">
          <TabStrip />
          <AddressBar />
          <ViewerHeader />
          <Viewer />
        </div>
      </div>
    </div>
  );
}
